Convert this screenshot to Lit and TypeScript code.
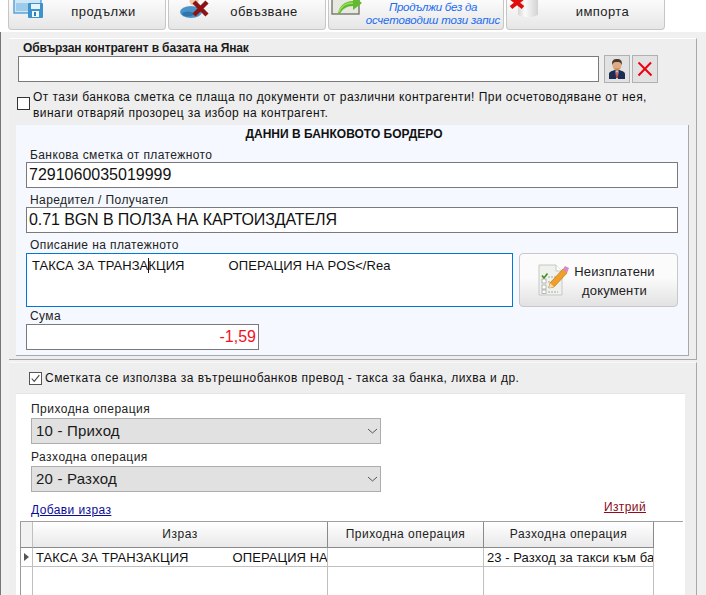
import { LitElement, html, css, svg } from "lit";
import { customElement } from "lit/decorators.js";

const saveIcon = svg`<svg class="ico" width="31" height="18" viewBox="0 0 31 18"><rect x="1" y="-6" width="27" height="19" fill="#cfe6f7" stroke="#4f9fd6" stroke-width="1.4"/><rect x="3" y="3" width="22" height="8" fill="#9fcbea"/><rect x="15" y="3" width="15" height="15" rx="1" fill="#3d93cc"/><rect x="18" y="4" width="9" height="5" fill="#e8f4fc"/><rect x="19" y="11" width="7" height="6" fill="#f2f8fc"/><rect x="21" y="12" width="2" height="4" fill="#2d7fb5"/></svg>`;
const unlinkIcon = svg`<svg class="ico" width="30" height="18" viewBox="0 0 30 18"><ellipse cx="11" cy="12" rx="11" ry="6" fill="#4b94c9"/><ellipse cx="8" cy="14" rx="6" ry="2.6" fill="#2f76ad"/><circle cx="14" cy="1" r="4.5" fill="#f0c7a8"/><path d="M14 2 L27 15 M27 2 L14 15" stroke="#8c1414" stroke-width="4.4"/></svg>`;
const skipIcon = svg`<svg class="ico" width="32" height="16" viewBox="0 0 32 16"><rect x="1" y="-6" width="27" height="20" fill="#e8e8e2" stroke="#77776f" stroke-width="1.4"/><path d="M7 14 C8 6 14 1 22 1 L22 -4 L31 3 L22 10 L22 6 C16 6 11 9 9 14 Z" fill="#62bb2c"/><path d="M8 12 C10 6 15 3 22 3" stroke="#9ade5c" stroke-width="1.5" fill="none"/></svg>`;
const dbIcon = svg`<svg class="ico" width="32" height="18" viewBox="0 0 32 18"><defs><linearGradient id="db" x1="0" x2="1"><stop offset="0" stop-color="#d6d6d6"/><stop offset=".35" stop-color="#fbfbfb"/><stop offset="1" stop-color="#d2d2d2"/></linearGradient></defs><path d="M9 -4 H29 V14 C29 18 9 18 9 14 Z" fill="url(#db)"/><path d="M2 -2 L14 7.5 M14 -2 L2 7.5" stroke="#e00b0b" stroke-width="4"/></svg>`;
const userIcon = svg`<svg width="18" height="20" viewBox="0 0 18 20"><path d="M1 20 V15 C1 12.5 4 12 7 11 L11 11 C14 12 17 12.5 17 15 V20 Z" fill="#1f2c52"/><path d="M7.5 11.5 L10.5 11.5 L9.8 20 H8.2 Z" fill="#f3f3f3"/><path d="M8.4 12.5 H9.6 L10 19 H8 Z" fill="#b03a3a"/><ellipse cx="9" cy="6" rx="4.6" ry="5.4" fill="#e0ab84"/><path d="M4.2 6 C3.4 1 6 0 9 0 C12 0 14.6 1 13.8 6 C13 3.5 11.5 3 9 3 C6.5 3 5 3.5 4.2 6 Z" fill="#4b3a30"/><path d="M5 8 C6 12 12 12 13 8 L12 9.5 H6 Z" fill="#c08a33"/></svg>`;
const redX = svg`<svg width="16" height="16" viewBox="0 0 16 16"><path d="M1.5 1.5 L14.5 14.5 M14 1.5 L1.5 14.5" stroke="#f00010" stroke-width="2" fill="none"/></svg>`;
const chev = svg`<svg class="chev" width="11" height="6" viewBox="0 0 11 6"><path d="M1 1 L5.5 5 L10 1" stroke="#555" stroke-width="1" fill="none"/></svg>`;
const checkMark = svg`<svg width="13" height="13" viewBox="0 0 13 13"><path d="M2 6.5 L5 10 L11 2.5" stroke="#444" stroke-width="1.3" fill="none"/></svg>`;
const taskIcon = svg`<svg width="31" height="32" viewBox="0 0 31 32"><path d="M1 1 H18 L24 7 V31 H1 Z" fill="#eef1ec" stroke="#c5c9c4"/><path d="M18 1 V7 H24" fill="#fff" stroke="#c5c9c4"/><rect x="4" y="15" width="4" height="4" fill="#fff" stroke="#9a9a9a" stroke-width=".7"/><rect x="4" y="21" width="4" height="4" fill="#fff" stroke="#9a9a9a" stroke-width=".7"/><rect x="4" y="26" width="4" height="3.6" fill="#fff" stroke="#9a9a9a" stroke-width=".7"/><path d="M4 11.5 L6 14 L9.5 9.5" stroke="#3f8f1c" stroke-width="1.6" fill="none"/><path d="M10 13 H20 M10 18 H14 M10 23 H15 M10 28 H20" stroke="#9a9a9a" stroke-width=".8" stroke-dasharray="2 1"/><path d="M11 24 L12 19 L25 5 L29 9 L16 23 Z" fill="#f0a028" stroke="#b06c10" stroke-width=".6"/><path d="M25 5 L27 2 L31 4 L29 9 Z" fill="#d98ac2"/><path d="M11 24 L12 19 L16 23 Z" fill="#f5dfb5"/></svg>`;

@customElement("app-root")
export class AppRoot extends LitElement {
  static styles = css`
    :host {
      display: block;
      width: 706px;
      height: 595px;
      overflow: hidden;
      background: #f0f0f0;
      font-family: "Liberation Sans", Arial, sans-serif;
      font-size: 12px;
      color: #111;
    }
    .toolbar {
      display: flex;
      gap: 2px;
      height: 32px;
      padding-left: 8px;
      background: #fff;
      box-sizing: border-box;
    }
    .tb {
      box-sizing: border-box;
      height: 30px;
      border: 1px solid #c6c6c6;
      border-top: 0;
      border-radius: 0 0 4px 4px;
      background: linear-gradient(#fbfbfb, #e6e6e6);
      display: flex;
      overflow: hidden;
      font-size: 13px;
      letter-spacing: 0.42px;
      color: #222;
    }
    .ico { display: block; flex: none; }
    .tb .t { flex: 1; min-width: 0; text-align: center; line-height: 24px; white-space: nowrap; }
    .w1 { width: 158px; padding-left: 4px; }
    .w2 { width: 158px; padding-left: 11px; }
    .w3 { width: 176px; padding-left: 2px; }
    .w4 { width: 159px; padding-left: 2px; }
    .w1 { letter-spacing: 0.55px; }
    .w1 .t { padding-right: 2px; }
    .w2 .t { padding-right: 7px; }
    .w3 .t {
      font-style: italic;
      color: #1a6cf0;
      font-size: 11.5px;
      line-height: 13px;
      padding-top: 1px;
    }
    .w3 .l1 { letter-spacing: -0.3px; }
    .w3 .l2 { letter-spacing: -0.17px; }
    .body { padding: 6px 9px 0 9px; box-sizing: border-box; border-left: 1px solid #777; height: 563px; }
    .panel {
      box-sizing: border-box;
      width: 688px;
      background: #eee;
      border-top: 1px solid #fff;
      border-right: 1px solid #a8a8a8;
      border-bottom: 1px solid #a8a8a8;
      margin-left: -1px;
    }
    .p1 { height: 322px; padding: 1px 7px 0 7px; }
    .lead { font-weight: bold; line-height: 14px; padding: 1px 0 0 7px; letter-spacing: -0.13px; color: #1a1a1a; }
    .linkrow { display: flex; padding-left: 2px; }
    .field { box-sizing: border-box; background: #fff; border: 1px solid #7a7a7a; }
    .linkrow .field { width: 581px; height: 26px; margin-top: 1px; }
    .sq {
      box-sizing: border-box; width: 26px; height: 28px; margin-left: 5px;
      background: #e2e2e2; border: 1px solid #b0b0b0;
      display: flex; align-items: center; justify-content: center;
    }
    .sq + .sq { margin-left: 2px; }
    .note { display: flex; align-items: flex-start; height: 31px; margin-top: 6px; padding-left: 1px; }
    .box {
      box-sizing: border-box; flex: none; width: 13px; height: 13px;
      background: #fff; border: 1px solid #333;
      display: flex; align-items: center; justify-content: center;
    }
    .note .box { margin: 8px 3px 0 0; }
    .note .tx { line-height: 16px; letter-spacing: 0.45px; white-space: nowrap; }
    .blue {
      box-sizing: border-box; height: 231px; width: 673px;
      margin-top: 5px;
      background: #f5f9ff;
      border-right: 1px solid #a8a8a8;
      border-bottom: 1px solid #a8a8a8;
      padding: 2px 10px 0 10px;
    }
    .ttl { text-align: center; font-weight: bold; line-height: 15px; padding-right: 16px; }
    .lbl { line-height: 13px; padding-left: 4px; letter-spacing: 0.4px; color: #222; }
    .lbl.first { margin-top: 7px; }
    .input {
      box-sizing: border-box; height: 26px; width: 652px;
      background: #fff; border: 1px solid #7a7a7a;
      font-size: 16px; line-height: 24px; padding-left: 2px; white-space: nowrap; color: #111;
    }
    .tight { letter-spacing: -0.09px; }
    .gap { margin-top: 6px; }
    .gap.s { margin-top: 3px; }
    .descrow { display: flex; gap: 6px; margin-top: 1px; }
    .desc {
      box-sizing: border-box; width: 487px; height: 54px;
      background: #fff; border: 1px solid #0078d7;
      font-size: 13px; line-height: 14px; padding: 4px 0 0 5px; white-space: pre; overflow: hidden; letter-spacing: 0.06px;
    }
    .caret { display: inline-block; width: 1px; height: 15px; background: #111; vertical-align: -3px; margin: 0 -1px 0 0; }
    .unpaid {
      box-sizing: border-box; width: 159px; height: 54px;
      border: 1px solid #c8c8c8; border-radius: 4px;
      background: linear-gradient(#fbfbfb 45%, #e2e2e2);
      display: flex; align-items: center; padding-left: 18px;
    }
    .unpaid .t { flex: 1; text-align: center; font-size: 13px; line-height: 19px; letter-spacing: 0.15px; color: #222; padding-right: 17px; margin-top: 2px; }
    .sum { width: 233px; height: 26px; text-align: right; color: #f5101e; padding: 0 2px 0 0; margin-top: 1px; }
    .p2 { margin-top: 2px; height: 240px; padding: 0 0 0 7px; border-bottom: 0; border-top-color: #f8f8f8; }
    .chk { display: flex; align-items: center; height: 30px; padding-left: 13px; }
    .chk .box { border-color: #555; margin-right: 3px; }
    .chk .tx { letter-spacing: 0.47px; white-space: nowrap; }
    .white { background: #fff; width: 669px; height: 210px; border-top: 1px solid #e4e4e4; box-sizing: border-box; padding: 0 0 0 15px; }
    .opl { line-height: 14px; letter-spacing: 0.47px; color: #222; }
    .opl.a { margin-top: 8px; }
    .opl.b { margin-top: 6px; }
    .sel {
      box-sizing: border-box; width: 350px; height: 26px; margin-top: 2px;
      background: #e1e1e1; border: 1px solid #adadad;
      font-size: 15px; line-height: 24px; padding-left: 4px; letter-spacing: 0.2px;
      display: flex; justify-content: space-between; align-items: center; color: #1a1a1a;
    }
    .chev { margin-right: 2px; }
    .links { display: flex; justify-content: space-between; width: 615px; height: 29px; align-items: flex-end; padding-bottom: 4px; box-sizing: border-box; letter-spacing: 0.4px; }
    .links a { color: #0b0b99; text-decoration: underline; line-height: 14px; }
    .links a.del { color: #8e0b20; margin-bottom: 3px; }
    .table { margin-left: -11px; width: 663px; border-top: 1px solid #a0a0a0; }
    .grid { display: grid; grid-template-columns: 13px 295px 156px 170px; }
    .h {
      box-sizing: border-box; height: 26px; text-align: center; line-height: 25px;
      background: linear-gradient(#fff, #e9e9e9);
      border-right: 1px solid #8a8a8a; border-bottom: 1px solid #8a8a8a;
      letter-spacing: 0.5px; color: #222; white-space: nowrap;
    }
    .h:first-child { border-left: 1px solid #999; background: #f2f2f2; border-right-color: #c0c0c0; }
    .c {
      box-sizing: border-box; height: 19px; line-height: 20px; font-size: 13px;
      border-right: 1px solid #c0c0c0; border-bottom: 1px solid #c0c0c0;
      background: #fff; white-space: pre; overflow: hidden; padding-left: 3px; letter-spacing: 0.06px; color: #111;
    }
    .c.rh { border-left: 1px solid #999; background: #fff; display: flex; align-items: center; padding-left: 3px; }
    .c.tall { height: 40px; border-bottom: 0; }
    .tri { width: 0; height: 0; border-left: 5px solid #555; border-top: 4.5px solid transparent; border-bottom: 4.5px solid transparent; }
  `;

  render() {
    return html`
      <div class="toolbar">
        <div class="tb w1">${saveIcon}<div class="t">продължи</div></div>
        <div class="tb w2">${unlinkIcon}<div class="t">обвъзване</div></div>
        <div class="tb w3">${skipIcon}<div class="t"><span class="l1">Продължи без да</span><br /><span class="l2">осчетоводиш този запис</span></div></div>
        <div class="tb w4">${dbIcon}<div class="t">импорта</div></div>
      </div>
      <div class="body">
        <section class="panel p1">
          <div class="lead">Обвързан контрагент в базата на Янак</div>
          <div class="linkrow">
            <div class="field"></div>
            <div class="sq">${userIcon}</div>
            <div class="sq">${redX}</div>
          </div>
          <div class="note">
            <span class="box"></span>
            <div class="tx">От тази банкова сметка се плаща по документи от различни контрагенти! При осчетоводяване от нея,<br />винаги отваряй прозорец за избор на контрагент.</div>
          </div>
          <div class="blue">
            <div class="ttl">ДАННИ В БАНКОВОТО БОРДЕРО</div>
            <div class="lbl first">Банкова сметка от платежното</div>
            <div class="input">7291060035019999</div>
            <div class="lbl gap">Наредител / Получател</div>
            <div class="input tight">0.71 BGN В ПОЛЗА НА КАРТОИЗДАТЕЛЯ</div>
            <div class="lbl gap">Описание на платежното</div>
            <div class="descrow">
              <div class="desc">ТАКСА ЗА ТРАНЗА<span class="caret"></span>КЦИЯ            ОПЕРАЦИЯ НА POS&lt;/Rea</div>
              <div class="unpaid">${taskIcon}<div class="t">Неизплатени<br />документи</div></div>
            </div>
            <div class="lbl gap s">Сума</div>
            <div class="input sum">-1,59</div>
          </div>
        </section>
        <section class="panel p2">
          <div class="chk">
            <span class="box">${checkMark}</span>
            <div class="tx">Сметката се използва за вътрешнобанков превод - такса за банка, лихва и др.</div>
          </div>
          <div class="white">
            <div class="opl a">Приходна операция</div>
            <div class="sel"><span>10 - Приход</span>${chev}</div>
            <div class="opl b">Разходна операция</div>
            <div class="sel"><span>20 - Разход</span>${chev}</div>
            <div class="links"><a>Добави израз</a><a class="del">Изтрий</a></div>
            <div class="table">
              <div class="grid">
                <div class="h"></div>
                <div class="h">Израз</div>
                <div class="h">Приходна операция</div>
                <div class="h">Разходна операция</div>
                <div class="c rh"><span class="tri"></span></div>
                <div class="c">ТАКСА ЗА ТРАНЗАКЦИЯ            ОПЕРАЦИЯ НА POS</div>
                <div class="c"></div>
                <div class="c">23 - Разход за такси към банка</div>
                <div class="c rh tall"></div>
                <div class="c tall"></div>
                <div class="c tall"></div>
                <div class="c tall"></div>
              </div>
            </div>
          </div>
        </section>
      </div>
    `;
  }
}
